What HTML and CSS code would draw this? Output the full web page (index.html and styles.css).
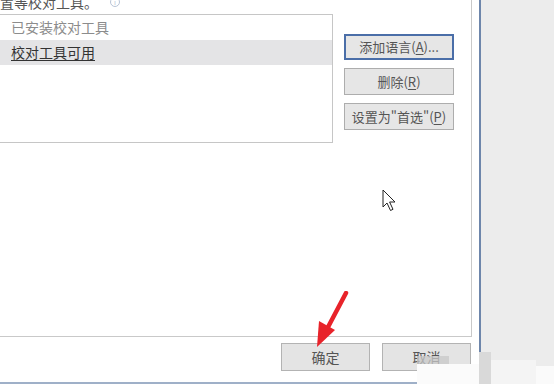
FILE: index.html
```html
<!DOCTYPE html>
<html lang="zh-CN">
<head>
<meta charset="utf-8">
<link rel="stylesheet" href="styles.css">
</head>
<body>
<div class="screen">
  <div class="dialog">
    <div class="panel">
      <div class="hint">设置等校对工具。<span class="info">i</span></div>
      <div class="content">
        <div class="listbox">
          <div class="item item-muted">已安装校对工具</div>
          <div class="item item-selected"><u>校对工具可用</u></div>
        </div>
        <div class="side-buttons">
          <div class="btn btn-focus">添加语言(<u>A</u>)...</div>
          <div class="btn">删除(<u>R</u>)</div>
          <div class="btn">设置为"首选"(<u>P</u>)</div>
        </div>
      </div>
    </div>
    <div class="footer">
      <div class="btn btn-footer">确定</div>
      <div class="btn btn-footer">取消</div>
    </div>
  </div>
  <div class="backdrop"></div>

  <svg class="cursor" width="18" height="24" viewBox="0 0 18 24">
    <path d="M1 1 L1 18 L5 14 L8.5 21.5 L11 20.3 L7.6 13 L13 13 Z" fill="#fff" stroke="#222" stroke-width="1" stroke-linejoin="round"/>
  </svg>

  <svg class="red-arrow" width="50" height="60" viewBox="0 0 50 60">
    <path d="M34 2 L15 38" stroke="#e8232a" stroke-width="4.5" stroke-linecap="round"/>
    <path d="M7 30 L23 39 L5 56 Z" fill="#e8232a"/>
  </svg>

  <div class="wm wm1"></div>
  <div class="wm wm2"></div>
  <div class="wm wm3"></div>
  <div class="wm wm4"></div>
  <div class="wm wm5"></div>
</div>
</body>
</html>
```
FILE: styles.css
```css
* { box-sizing: border-box; }
html, body { margin: 0; padding: 0; }
body {
  font-family: "Noto Sans CJK SC", "Noto Sans", sans-serif;
  background: #ececec;
}
.screen {
  position: relative;
  width: 554px;
  height: 384px;
  overflow: hidden;
  display: flex;
}
.dialog {
  width: 481px;
  height: 384px;
  background: #fff;
  border-right: 2px solid #6e86ab;
  border-bottom: 2px solid #9fb0c8;
  display: flex;
  flex-direction: column;
}
.backdrop {
  flex: 1;
  background: #ececec;
}
.panel {
  width: 472px;
  height: 337px;
  border-right: 1px solid #c9c9c9;
  border-bottom: 1px solid #c9c9c9;
  overflow: hidden;
}
.hint {
  margin: -10px 0 0 -14px;
  height: 24px;
  font-size: 14px;
  line-height: 20px;
  color: #555;
  display: flex;
  align-items: center;
}
.info {
  margin-left: 12px;
  width: 10px;
  height: 10px;
  border: 1px solid #b8c4d6;
  border-radius: 50%;
  font-size: 7px;
  line-height: 8px;
  text-align: center;
  color: #b8c4d6;
}
.content {
  display: flex;
  align-items: flex-start;
  gap: 11px;
}
.listbox {
  margin-left: -10px;
  width: 343px;
  height: 129px;
  border: 1px solid #c6c6c6;
  background: #fff;
}
.item {
  height: 25px;
  padding-left: 20px;
  font-size: 14px;
  line-height: 25px;
}
.item-muted { color: #8c8c8c; }
.item-selected {
  background: #e4e4e6;
  color: #333;
}
.item-selected u { text-decoration-thickness: 1px; text-underline-offset: 2px; }
.side-buttons {
  margin-top: 20px;
  display: flex;
  flex-direction: column;
  gap: 8px;
}
.btn {
  width: 110px;
  height: 27px;
  background: #e6e6e6;
  border: 1px solid #adadad;
  color: #555;
  font-size: 13px;
  line-height: 25px;
  text-align: center;
  white-space: nowrap;
}
.btn u { text-underline-offset: 2px; }
.btn-focus {
  height: 26px;
  border: 2px solid #4a6ea8;
  line-height: 22px;
}
.footer {
  display: flex;
  justify-content: flex-end;
  gap: 12px;
  padding: 6px 8px 0 0;
}
.btn-footer {
  width: 89px;
  height: 28px;
  line-height: 26px;
  background: #e4e4e4;
  border-color: #b3b3b3;
  font-size: 14px;
}
.cursor {
  position: absolute;
  left: 382px;
  top: 189px;
}
.red-arrow {
  position: absolute;
  left: 312px;
  top: 291px;
}
.wm { position: absolute; }
.wm1 { left: 417px; top: 356px; width: 32px; height: 12px; background: rgba(200, 200, 200, 0.75); }
.wm2 { left: 417px; top: 364px; width: 62px; height: 20px; background: #fbfbfb; }
.wm3 { left: 479px; top: 352px; width: 12px; height: 32px; background: #d9d9d9; }
.wm4 { left: 491px; top: 360px; width: 45px; height: 24px; background: #f4f4f4; }
.wm5 { left: 536px; top: 366px; width: 18px; height: 18px; background: #fafafa; }
```
